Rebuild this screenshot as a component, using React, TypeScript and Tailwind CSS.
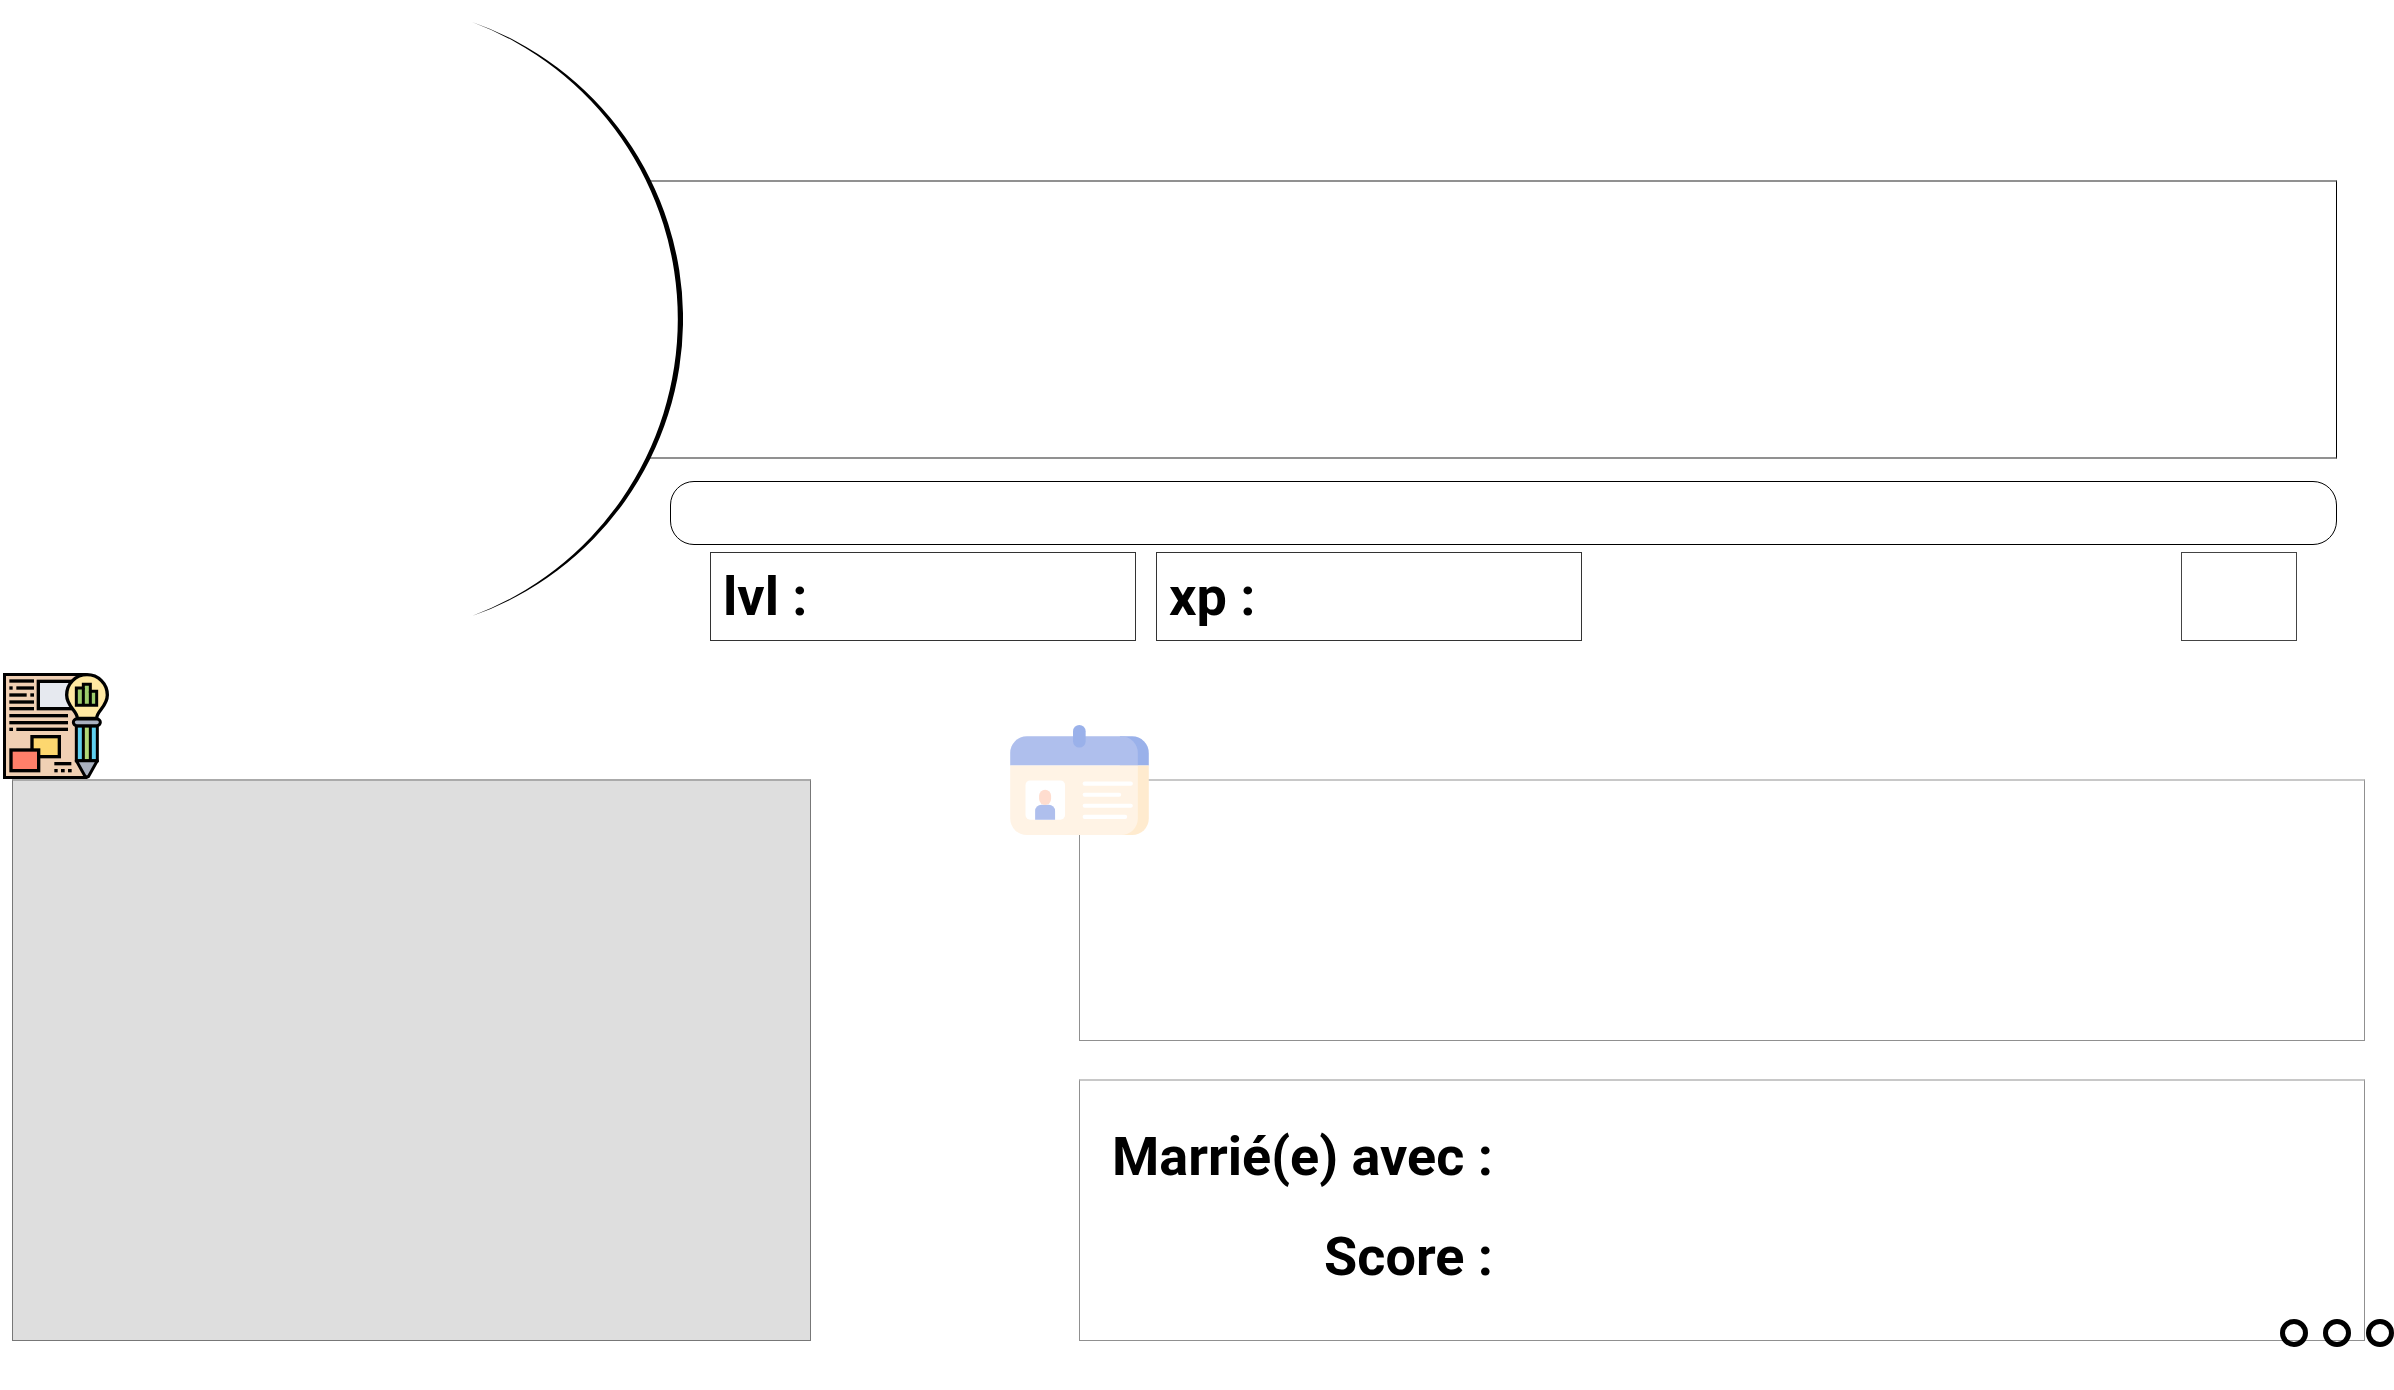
function ProjectIcon() {
  const lines = [
    [28, 58, 102], [28, 79, 38], [49, 79, 102], [28, 100, 80], [91, 100, 102], [28, 121, 102],
    [28, 141, 102], [28, 162, 204], [28, 183, 204], [28, 203, 39], [49, 203, 204],
    [163, 306, 214], [163, 327, 173], [183, 327, 194], [204, 327, 215],
  ]
  return (
    <svg viewBox="9 39 318 318" className="block h-[106px] w-[106px]" role="img" aria-label="Projets">
      <path d="M13 43H260V352H13Z" fill="#f0d0b4" />
      <path d="M262 39H9V357H264L256 348H18V48H250Z" fill="#000" />
      {lines.map(([x, y, end]) => (
        <rect key={`${x}-${y}`} x={x} y={y} width={end - x} height="10" />
      ))}
      <rect x="115" y="64" width="110" height="82" fill="#e6e9ef" stroke="#000" strokeWidth="10" />
      <rect x="96" y="230" width="82" height="60" fill="#fdd76f" stroke="#000" strokeWidth="10" />
      <rect x="33" y="270" width="83" height="62" fill="#ff7f6a" stroke="#000" strokeWidth="10" />
      <path
        d="M232 175C232 152 200 140 200 105A61 61 0 0 1 322 105C322 140 290 152 290 175Z"
        fill="#ffe8a2"
        stroke="#000"
        strokeWidth="10"
      />
      <path d="M229 84H250V73H271V94H290V136H229Z" fill="#9dcc6b" stroke="#000" strokeWidth="9" />
      <path d="M250 84V136M271 94V136" stroke="#000" strokeWidth="9" />
      <path d="M229 198H292V302H229Z" fill="#5fd0ef" stroke="#000" strokeWidth="9" />
      <path d="M250 198H271V302H250Z" fill="#b0d878" stroke="#000" strokeWidth="9" />
      <path d="M229 302H292L265 350H256Z" fill="#a9b1c0" stroke="#000" strokeWidth="9" strokeLinejoin="round" />
      <rect x="220" y="177" width="81" height="20" rx="10" fill="#a9b1c0" stroke="#000" strokeWidth="9" />
    </svg>
  )
}

function IdentityIcon() {
  return (
    <svg viewBox="30 30 417 331" className="block h-[110px] w-[139px]" role="img" aria-label="Carte d'identité">
      <path d="M360 64H397A50 50 0 0 1 447 114V152H360Z" fill="#9ab1ea" />
      <path d="M360 152H447V311A50 50 0 0 1 397 361H360Z" fill="#ffebcf" />
      <path d="M80 64H364A50 50 0 0 1 414 114V152H30V114A50 50 0 0 1 80 64Z" fill="#afbfed" />
      <path d="M30 152H414V311A50 50 0 0 1 364 361H80A50 50 0 0 1 30 311Z" fill="#fff3e5" />
      <rect x="219" y="30" width="38" height="68" rx="19" fill="#9ab1ea" />
      <rect x="76" y="197" width="119" height="118" rx="14" fill="#fff" />
      <path d="M105 315V289A19 19 0 0 1 124 270H146A19 19 0 0 1 165 289V315Z" fill="#afbfed" />
      <rect x="117" y="225" width="36" height="46" rx="18" fill="#ffddcf" />
      <g fill="#fff">
        <rect x="248" y="200" width="151" height="13" rx="6" />
        <rect x="248" y="234" width="116" height="12" rx="6" />
        <rect x="248" y="267" width="151" height="12" rx="6" />
        <rect x="248" y="300" width="134" height="13" rx="6" />
      </g>
    </svg>
  )
}

function AvatarRing() {
  return (
    <svg viewBox="0 0 683 638" className="z-10 block h-[638px] w-[683px] shrink-0" aria-hidden="true">
      <circle cx="364" cy="319" r="316" fill="#fff" />
      <path d="M472 22A314.5 314.5 0 0 1 472 616A317.2 317.2 0 0 0 472 22Z" fill="#000" />
    </svg>
  )
}

export default function App() {
  return (
    <main className="overflow-x-hidden bg-white pb-12 font-['Roboto','Liberation_Sans',sans-serif] text-[54px] leading-[64px] font-bold text-black">
      <header className="flex">
        <AvatarRing />
        <div className="-ml-[83px] min-w-0 flex-1 pt-[180px] pr-[57px]">
          <section className="h-[279px] border-y-2 border-r border-y-[#919191] border-r-black" />
          <div className="mt-[22px] ml-[70px] h-[64px] rounded-[24px] border border-black" />
          <div className="mt-[7px] mr-[40px] ml-[110px] flex gap-[20px]">
            <div className="flex h-[89px] w-[426px] items-center border border-[#333] pl-3">lvl :</div>
            <div className="flex h-[89px] w-[426px] items-center border border-[#333] pl-3">xp :</div>
            <div className="ml-auto h-[89px] w-[116px] border border-[#444]" />
          </div>
        </div>
      </header>

      <div className="flex items-start justify-between pt-[138px] pr-[29px] pl-[12px]">
        <section className="relative h-[562px] w-[799px] border border-t-2 border-[#777] border-t-[#aaa] bg-[#dedede]">
          <div className="absolute -top-[108px] -left-[10px]">
            <ProjectIcon />
          </div>
        </section>
        <div className="flex w-[1286px] flex-col gap-[38px]">
          <section className="relative h-[262px] border border-t-2 border-[#909090] border-t-[#c8c8c8]">
            <div className="absolute -top-[56px] -left-[70px]">
              <IdentityIcon />
            </div>
          </section>
          <section className="relative h-[262px] border border-t-2 border-[#909090] border-t-[#c8c8c8]">
            <dl className="flex w-[413px] flex-col gap-[36px] pt-[44px] text-right whitespace-nowrap">
              <dt>Marrié(e) avec :</dt>
              <dt>Score :</dt>
            </dl>
            <div className="absolute -right-[30px] -bottom-[7px] flex gap-[15px]">
              <span className="h-[28px] w-[28px] rounded-full border-[5px] border-black" />
              <span className="h-[28px] w-[28px] rounded-full border-[5px] border-black" />
              <span className="h-[28px] w-[28px] rounded-full border-[5px] border-black" />
            </div>
          </section>
        </div>
      </div>
    </main>
  )
}
